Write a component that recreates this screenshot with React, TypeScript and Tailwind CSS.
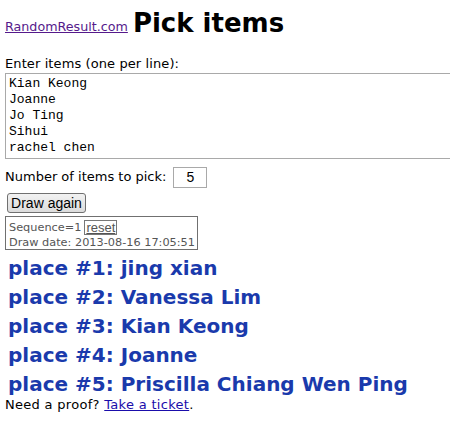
// App.tsx — RandomResult.com "Pick items" result page.

const places = [
  "jing xian",
  "Vanessa Lim",
  "Kian Keong",
  "Joanne",
  "Priscilla Chiang Wen Ping",
];

const items = ["Kian Keong", "Joanne", "Jo Ting", "Sihui", "rachel chen"];

export default function App() {
  return (
    <div className="w-[450px] h-[428px] overflow-hidden bg-white text-black font-['DejaVu_Sans',Verdana,sans-serif] text-[13px] leading-[16px]">
      {/* header */}
      <div className="flex items-end pl-[5px] pt-[8px] h-[38px]">
        <a href="#" className="text-[12.7px] text-[#551a8b] underline leading-[16px] mb-[3px]">
          RandomResult.com
        </a>
        <h1 className="ml-[5px] text-[26px] font-bold leading-[30px]">Pick items</h1>
      </div>

      <div className="pl-[5px] pt-[18px] tracking-[0.1px]">Enter items (one per line):</div>

      {/* items textarea (runs off the right edge) */}
      <div className="ml-[5px] mt-[1px] w-[480px] h-[86px] border border-[#a9a9a9] px-[3px] pt-[2px] font-['Liberation_Mono',monospace] text-[13px] leading-[16px]">
        {items.map((it) => (
          <div key={it} className="whitespace-pre">{it}</div>
        ))}
      </div>

      {/* number to pick */}
      <div className="flex items-center pl-[5px] mt-[8px] h-[20px]">
        <span>Number of items to pick:</span>
        <div className="ml-[7px] w-[34px] h-[21px] border border-[#a9a9a9] flex items-center justify-center font-['Liberation_Sans',Arial,sans-serif] text-[14px]">
          5
        </div>
      </div>

      <button
        type="button"
        className="ml-[7px] mt-[6px] h-[20px] w-[79px] rounded-[3px] border border-[#707070] bg-gradient-to-b from-[#f2f2f2] to-[#dcdcdc] font-['Liberation_Sans',Arial,sans-serif] text-[14px] leading-[16px] flex items-center justify-center"
      >
        Draw again
      </button>

      {/* sequence box */}
      <div className="ml-[5px] mt-[3px] w-[193px] h-[34px] border border-[#707070] pl-[3px] pt-[3px] text-[11.3px] leading-[13px] text-[#555]">
        <div className="flex items-center">
          <span>Sequence=1</span>
          <a href="#" className="ml-[3px] border border-[#777] px-[1px] underline text-[#555] text-[13px] leading-[13px] font-['Liberation_Sans',Arial,sans-serif]">
            reset
          </a>
        </div>
        <div className="mt-[1px]">Draw date: 2013-08-16 17:05:51</div>
      </div>

      {/* results */}
      <div className="pl-[8px] mt-[4px] text-[#1a3aac] text-[20px] font-bold leading-[29px]">
        {places.map((p, i) => (
          <div key={p}>
            place #{i + 1}: {p}
          </div>
        ))}
      </div>

      <div className="pl-[5px] -mt-[2px] tracking-[0.3px]">
        Need a proof?{" "}
        <a href="#" className="text-[#1a0dab] underline">
          Take a ticket
        </a>
        .
      </div>
    </div>
  );
}
